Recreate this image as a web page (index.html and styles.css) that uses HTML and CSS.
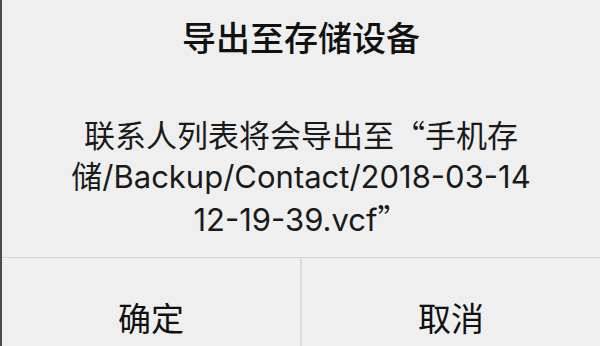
FILE: index.html
```html
<!DOCTYPE html>
<html lang="zh-CN">
<head>
    <meta charset="UTF-8">
    <meta name="viewport" content="width=device-width, initial-scale=1.0">
    <title>导出至存储设备</title>
    <link rel="stylesheet" href="styles.css">
</head>
<body>
    <div class="dialog">
        <h2 class="dialog-title">导出至存储设备</h2>
        <p class="dialog-message">联系人列表将会导出至<span class="quote">“</span>手机存<br>储/Backup/Contact/2018-03-14<br>12-19-39.vcf<span class="quote">”</span></p>
        <div class="dialog-actions">
            <button class="confirm">确定</button>
            <button class="cancel">取消</button>
        </div>
    </div>
</body>
</html>
```

FILE: styles.css
```css
body {
    margin: 0;
    padding: 0;
    background-color: #efefef;
    font-family: Inter, "Noto Sans CJK SC", sans-serif;
    color: #111;
    overflow: hidden;
}
.dialog {
    width: 598px;
    height: 346px;
    overflow: hidden;
    border-left: 2px solid #4a4a4a;
    background-color: #efefef;
    display: flex;
    flex-direction: column;
}
.dialog-title {
    margin: 0;
    padding-top: 18px;
    font-size: 34px;
    line-height: 41px;
    font-weight: 500;
    text-align: center;
}
.dialog-message {
    margin: 54px 0 0;
    font-size: 31px;
    line-height: 41px;
    text-align: center;
    color: #1a1a1a;
}
.dialog-message .quote {
    font-family: "Noto Sans CJK SC", sans-serif;
}
.dialog-actions {
    margin-top: 17px;
    display: flex;
    border-top: 1px solid #d6d6d6;
    flex: 0 0 118px;
}
.dialog-actions button {
    flex: 1;
    border: none;
    background: none;
    font-family: inherit;
    font-size: 33px;
    color: #111;
    padding: 0;
    cursor: pointer;
}
.dialog-actions .confirm {
    border-right: 2px solid #dcdcdc;
}
```
